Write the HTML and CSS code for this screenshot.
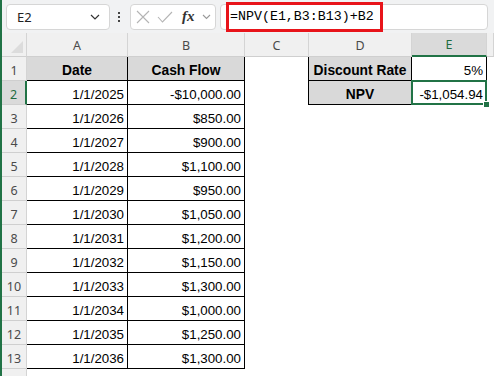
FILE: index.html
```html
<!DOCTYPE html>
<html>
<head>
<meta charset="utf-8">
<link rel="stylesheet" href="styles.css">
</head>
<body>
<div class="fbar">
  <div class="namebox"><span>E2</span>
    <svg class="chev" width="10" height="6" viewBox="0 0 10 6"><path d="M1 1 L5 5 L9 1" fill="none" stroke="#333" stroke-width="1.2"/></svg>
  </div>
  <div class="dots"><i></i><i></i><i></i></div>
  <div class="fnbox">
    <svg width="14" height="14" viewBox="0 0 14 14"><path d="M1 1 L13 13 M13 1 L1 13" stroke="#b4b4b4" stroke-width="1.1" fill="none"/></svg>
    <svg width="16" height="12" viewBox="0 0 16 12"><path d="M1 6 L5.5 11 L15 1" stroke="#b4b4b4" stroke-width="1.1" fill="none"/></svg>
    <span class="fx">fx</span>
    <svg width="9" height="6" viewBox="0 0 9 6"><path d="M1 1 L4.5 4.5 L8 1" fill="none" stroke="#999" stroke-width="1.1"/></svg>
  </div>
  <div class="finput">
    <span class="ftext">=NPV(E1,B3:B13)+B2</span>
    <div class="mark"></div>
  </div>
</div>
<div class="sheet">
  <div class="ch corner"><span class="tri"></span></div>
  <div class="ch">A</div><div class="ch">B</div><div class="ch">C</div><div class="ch">D</div><div class="ch sel">E</div><div class="ch"></div>

  <div class="rh">1</div>
  <div class="c t hd">Date</div><div class="c t hd">Cash Flow</div><div class="c bl"></div><div class="c t hd">Discount Rate</div><div class="c t r">5%</div><div class="c"></div>

  <div class="rh rsel">2</div>
  <div class="c t r">1/1/2025</div><div class="c t r">-$10,000.00</div><div class="c bl"></div><div class="c t hd">NPV</div><div class="c t r active">-$1,054.94</div><div class="c"></div>

  <div class="rh">3</div><div class="c t r">1/1/2026</div><div class="c t r">$850.00</div><div class="c"></div><div class="c"></div><div class="c"></div><div class="c"></div>
  <div class="rh">4</div><div class="c t r">1/1/2027</div><div class="c t r">$900.00</div><div class="c"></div><div class="c"></div><div class="c"></div><div class="c"></div>
  <div class="rh">5</div><div class="c t r">1/1/2028</div><div class="c t r">$1,100.00</div><div class="c"></div><div class="c"></div><div class="c"></div><div class="c"></div>
  <div class="rh">6</div><div class="c t r">1/1/2029</div><div class="c t r">$950.00</div><div class="c"></div><div class="c"></div><div class="c"></div><div class="c"></div>
  <div class="rh">7</div><div class="c t r">1/1/2030</div><div class="c t r">$1,050.00</div><div class="c"></div><div class="c"></div><div class="c"></div><div class="c"></div>
  <div class="rh">8</div><div class="c t r">1/1/2031</div><div class="c t r">$1,200.00</div><div class="c"></div><div class="c"></div><div class="c"></div><div class="c"></div>
  <div class="rh">9</div><div class="c t r">1/1/2032</div><div class="c t r">$1,150.00</div><div class="c"></div><div class="c"></div><div class="c"></div><div class="c"></div>
  <div class="rh">10</div><div class="c t r">1/1/2033</div><div class="c t r">$1,300.00</div><div class="c"></div><div class="c"></div><div class="c"></div><div class="c"></div>
  <div class="rh">11</div><div class="c t r">1/1/2034</div><div class="c t r">$1,000.00</div><div class="c"></div><div class="c"></div><div class="c"></div><div class="c"></div>
  <div class="rh">12</div><div class="c t r">1/1/2035</div><div class="c t r">$1,250.00</div><div class="c"></div><div class="c"></div><div class="c"></div><div class="c"></div>
  <div class="rh">13</div><div class="c t r">1/1/2036</div><div class="c t r">$1,300.00</div><div class="c"></div><div class="c"></div><div class="c"></div><div class="c"></div>
  <div class="rh"></div><div class="c"></div><div class="c"></div><div class="c"></div><div class="c"></div><div class="c"></div><div class="c"></div>
</div>
</body>
</html>
```
FILE: styles.css
```css
html, body {
  margin: 0;
  padding: 0;
}
body {
  border-left: 2px solid #217346;
  background: #fff;
  font-family: "Liberation Sans", Arial, sans-serif;
  height: 376px;
  overflow: hidden;
  box-sizing: border-box;
}
.fbar {
  display: flex;
  align-items: center;
  height: 33px;
  background: #f1f2f3;
  padding-left: 4px;
  box-sizing: border-box;
}
.namebox {
  width: 104px;
  height: 26px;
  box-sizing: border-box;
  border: 1px solid #d6d6d6;
  border-radius: 4px;
  background: #fff;
  display: flex;
  align-items: center;
  justify-content: space-between;
  padding: 0 9px 0 10px;
  font: 13px "Noto Sans", sans-serif;
  color: #222;
}
.dots {
  display: flex;
  flex-direction: column;
  gap: 2px;
  margin: 0 10px 0 8px;
}
.dots i {
  display: block;
  width: 2px;
  height: 2px;
  background: #444;
}
.fnbox {
  width: 86px;
  height: 26px;
  box-sizing: border-box;
  border: 1px solid #d6d6d6;
  border-radius: 4px;
  background: #fff;
  display: flex;
  align-items: center;
  gap: 7px;
  padding-left: 5px;
}
.fx {
  font-family: "Liberation Serif", serif;
  font-style: italic;
  font-weight: bold;
  font-size: 15px;
  color: #333;
  margin-left: 2px;
}
.finput {
  position: relative;
  margin-left: 4px;
  width: 268px;
  height: 26px;
  box-sizing: border-box;
  border: 1px solid #d6d6d6;
  border-radius: 4px;
  background: #fff;
  display: flex;
  align-items: center;
  padding-left: 9px;
}
.ftext {
  font-family: "Liberation Mono", monospace;
  font-size: 13.3px;
  color: #000;
}
.mark {
  position: absolute;
  left: 5px;
  top: -3px;
  width: 157px;
  height: 30px;
  box-sizing: border-box;
  border: 3px solid #e8141a;
}
.sheet {
  display: grid;
  grid-template-columns: 25px 101px 117px 64px 103px 75px 1fr;
  grid-auto-rows: 24px;
}
.ch, .rh {
  background: #f0f0f0;
  color: #4a4a4a;
  font: 12.5px "Noto Sans", sans-serif;
  display: flex;
  align-items: center;
  justify-content: center;
  box-sizing: border-box;
  border-right: 1px solid #d4d4d4;
  border-bottom: 1px solid #cfcfcf;
}
.ch {
  padding-top: 1px;
}
.rh {
  padding-top: 3px;
}
.corner {
  position: relative;
}
.tri {
  position: absolute;
  right: 3px;
  bottom: 3px;
  width: 0;
  height: 0;
  border-left: 12px solid transparent;
  border-bottom: 12px solid #dcdcdc;
}
.ch.sel {
  background: #dadada;
  color: #1e6b41;
  border-bottom: 2px solid #217346;
}
.rh.rsel {
  background: #dadada;
  color: #1e6b41;
  border-right: 2px solid #217346;
}
.c {
  box-sizing: border-box;
  font-size: 13.3px;
  color: #000;
  display: flex;
  align-items: center;
  padding-top: 3px;
  white-space: nowrap;
}
.t {
  border-right: 1px solid #000;
  border-bottom: 1px solid #000;
}
.bl {
  border-right: 1px solid #000;
}
.r {
  justify-content: flex-end;
  padding-right: 3px;
}
.hd {
  background: #d9d9d9;
  font-weight: bold;
  font-size: 13.8px;
  justify-content: center;
}
.active {
  position: relative;
}
.active::after {
  content: "";
  position: absolute;
  left: -1px;
  top: -1px;
  right: -1px;
  bottom: -1px;
  border: 2px solid #217346;
}
.active::before {
  content: "";
  position: absolute;
  right: -4px;
  bottom: -4px;
  width: 5px;
  height: 5px;
  background: #217346;
  border: 1px solid #fff;
  z-index: 2;
}
```
